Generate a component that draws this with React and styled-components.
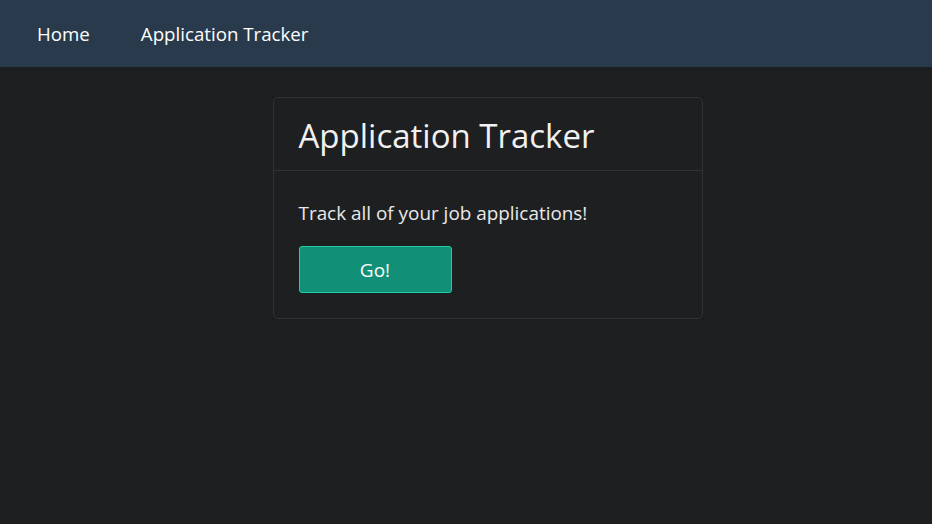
import React from "react";
import styled, { createGlobalStyle } from "styled-components";

const Global = createGlobalStyle`
  html, body { margin: 0; padding: 0; background: #1d1e20; }
  body { font-family: "Open Sans", "Noto Sans", sans-serif; color: #e9ecef; }
`;

const Nav = styled.nav`
  height: 67px;
  background: #283a4b;
  display: flex;
  align-items: center;
  padding-left: 37px;
  gap: 51px;
`;

const NavLink = styled.a`
  color: #ffffff;
  font-size: 18.7px;
  text-decoration: none;
`;

const Main = styled.main`
  display: flex;
  justify-content: center;
  padding: 30px 0 0 43px;
`;

const Card = styled.section`
  width: 430px;
  border: 1px solid #303235;
  border-radius: 5px;
  background: #1e1f21;
  box-sizing: border-box;
`;

const CardHeader = styled.header`
  height: 73px;
  border-bottom: 1px solid #303235;
  padding: 3px 25px 0;
  display: flex;
  align-items: center;
  box-sizing: border-box;
`;

const Title = styled.h1`
  margin: 0;
  font-weight: 400;
  font-size: 33px;
  color: #f1f1f1;
`;

const CardBody = styled.div`
  padding: 29px 25px 25px;
  display: flex;
  flex-direction: column;
  align-items: flex-start;
  gap: 19px;
`;

const Text = styled.p`
  margin: 0;
  font-size: 18.9px;
  color: #e9e9e9;
  line-height: 27px;
`;

const Button = styled.button`
  width: 153px;
  height: 47px;
  background: #128f77;
  border: 1px solid #22cfa4;
  border-radius: 3px;
  color: #ffffff;
  font-family: inherit;
  font-size: 19px;
  cursor: pointer;
`;

export default function App() {
  return (
    <>
      <Global />
      <Nav>
        <NavLink href="#">Home</NavLink>
        <NavLink href="#">Application Tracker</NavLink>
      </Nav>
      <Main>
        <Card>
          <CardHeader>
            <Title>Application Tracker</Title>
          </CardHeader>
          <CardBody>
            <Text>Track all of your job applications!</Text>
            <Button>Go!</Button>
          </CardBody>
        </Card>
      </Main>
    </>
  );
}
